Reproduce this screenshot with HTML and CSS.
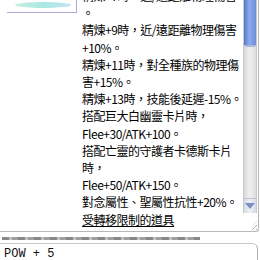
FILE: index.html
```html
<!DOCTYPE html>
<html>
	<head>
		<meta charset="utf-8" />
		<title>道具說明</title>
		<link rel="stylesheet" href="styles.css">
	</head>
	<body>
		<div id="tooltip">
			<div class="pic-col">
				<div class="pic">
					<div class="glow"></div>
				</div>
			</div>
			<div class="desc">
				<div>精煉+7時，近/遠距離物理傷害+5%</div>
				<div>。</div>
				<div>精煉+9時，近/遠距離物理傷害</div>
				<div>+10%。</div>
				<div>精煉+11時，對全種族的物理傷</div>
				<div>害+15%。</div>
				<div>精煉+13時，技能後延遲-15%。</div>
				<div>搭配巨大白幽靈卡片時，</div>
				<div>Flee+30/ATK+100。</div>
				<div>搭配亡靈的守護者卡德斯卡片</div>
				<div>時，</div>
				<div>Flee+50/ATK+150。</div>
				<div>對念屬性、聖屬性抗性+20%。</div>
				<div class="link">受轉移限制的道具</div>
			</div>
			<div class="side">
				<div class="scroll">
					<div class="thumb"></div>
					<div class="track"></div>
					<div class="arrow"><div class="tri"></div></div>
				</div>
				<div class="grip"></div>
			</div>
		</div>
		<div class="under">
			<div class="ghost"></div>
			<div class="input">POW + 5</div>
		</div>
	</body>
</html>
```
FILE: styles.css
```css
body {
	margin: 0px;
	width: 260px;
	height: 260px;
	overflow: hidden;
	background-color: white;
	font-family: "Noto Sans CJK TC", "Liberation Sans", sans-serif;
}

#tooltip {
	display: flex;
	width: 258px;
	height: 231px;
	border-right: 1px solid #b8b8b8;
	border-bottom: 1px solid #b8b8b8;
	border-bottom-right-radius: 3px;
	overflow: hidden;
	background-color: white;
}

.pic-col {
	width: 82px;
	flex-shrink: 0;
}

.pic {
	margin-left: 7px;
	width: 69px;
	height: 12px;
	border-right: 1px solid #a9a9d6;
	border-bottom: 1px solid #a9a9d6;
	position: relative;
}

.glow {
	position: absolute;
	left: 8px;
	top: 2px;
	width: 56px;
	height: 6px;
	border-radius: 50%;
	background: linear-gradient(90deg, #c8f0e0, #a8e8e0, #c0e4f4);
}

.desc {
	flex: 1;
	min-width: 0px;
	overflow: hidden;
	margin-top: -13px;
	font-size: 12px;
	line-height: 17.2px;
	color: #000;
	white-space: nowrap;
	letter-spacing: -0.5px;
}

.link {
	text-decoration: underline;
}

.side {
	width: 14px;
	flex-shrink: 0;
	display: flex;
	flex-direction: column;
	margin-right: 1px;
}

.scroll {
	height: 213px;
	display: flex;
	flex-direction: column;
	background-color: #ececec;
	border-left: 1px solid #c8c8c8;
	border-right: 1px solid #c8c8c8;
}

.thumb {
	height: 45px;
	background: linear-gradient(90deg, #5878c8, #8cacec 45%, #6c8cd8);
	border-bottom: 2px solid #a8b8d8;
	border-radius: 0px 0px 2px 2px;
}

.track {
	flex: 1;
	background: linear-gradient(90deg, #d8d8d8, #f0f0f0 50%, #dcdcdc);
}

.arrow {
	height: 14px;
	display: flex;
	justify-content: center;
	align-items: center;
	background: linear-gradient(90deg, #d4dae4, #eef0f6, #d4dae4);
	border-top: 1px solid #c0c4cc;
}

.tri {
	width: 0px;
	height: 0px;
	border-left: 5px solid transparent;
	border-right: 5px solid transparent;
	border-top: 6px solid #7a90c0;
}

.grip {
	flex: 1;
	background: repeating-linear-gradient(135deg, transparent 0px, transparent 2px, #b0b0b0 2px, #b0b0b0 3px);
	margin: 8px 0px 1px 6px;
	clip-path: polygon(100% 0, 100% 100%, 0 100%);
}

.under {
	position: relative;
	height: 28px;
}

.ghost {
	height: 3px;
	margin: 5px 60px 0px 2px;
	background: repeating-linear-gradient(90deg, #555 0px, #555 7px, #aaa 7px, #aaa 10px, #777 10px, #777 16px);
	opacity: 0.7;
}

.input {
	margin: 3px 2px 0px 0px;
	height: 20px;
	border: 1px solid #c8c8c8;
	border-right-color: #b0b0b0;
	border-radius: 0px 6px 0px 0px;
	padding-left: 4px;
	font-family: "Liberation Mono", monospace;
	font-size: 12px;
	line-height: 20px;
	color: #111;
	border-left: none;
	border-bottom: none;
}
```
